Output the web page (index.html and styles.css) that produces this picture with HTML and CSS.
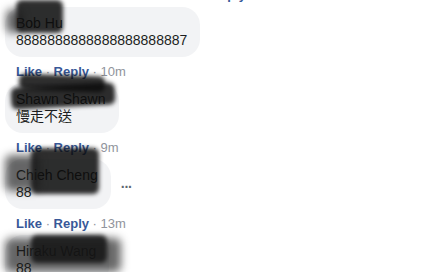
FILE: index.html
```html
<!DOCTYPE html>
<html>
<head>
<meta charset="utf-8">
<link rel="stylesheet" href="styles.css">
</head>
<body>
<div class="thread">
  <div class="cut"><div class="actions cut-line"><span class="link">Like</span><span class="sep"> · </span><span class="link">Reply</span></div></div>

  <div class="comment">
    <div class="row">
      <div class="bubble"><div class="name">Bob Hu</div><div class="body">8888888888888888888887</div></div>
    </div>
    <span class="ink" style="left:11px;top:-7px;width:47px;height:33px"></span>
    <span class="ink soft" style="left:1px;top:2px;width:16px;height:24px"></span>
    <div class="actions"><span class="link">Like</span><span class="sep"> · </span><span class="link">Reply</span><span class="sep"> · </span><span class="time">10m</span></div>
  </div>

  <div class="comment">
    <div class="row">
      <div class="bubble"><div class="name">Shawn Shawn</div><div class="body cjk">慢走不送</div></div>
    </div>
    <span class="ink" style="left:14px;top:-8px;width:86px;height:16px;transform:rotate(2deg)"></span>
    <span class="ink" style="left:6px;top:2px;width:104px;height:22px;transform:rotate(-3deg)"></span>
    <div class="actions"><span class="link">Like</span><span class="sep"> · </span><span class="link">Reply</span><span class="sep"> · </span><span class="time">9m</span></div>
  </div>

  <div class="comment">
    <div class="row">
      <div class="bubble"><div class="name">Chieh Cheng</div><div class="body">88</div></div>
      <div class="more">···</div>
    </div>
    <span class="ink" style="left:26px;top:-11px;width:68px;height:46px"></span>
    <span class="ink soft" style="left:0px;top:-4px;width:34px;height:36px"></span>
    <div class="actions"><span class="link">Like</span><span class="sep"> · </span><span class="link">Reply</span><span class="sep"> · </span><span class="time">13m</span></div>
  </div>

  <div class="comment">
    <div class="row">
      <div class="bubble"><div class="name">Hiraku Wang</div><div class="body">88</div></div>
    </div>
    <span class="ink" style="left:26px;top:0px;width:76px;height:28px"></span>
    <span class="ink soft" style="left:0px;top:3px;width:116px;height:34px"></span>
  </div>
</div>
</body>
</html>
```

FILE: styles.css
```css
html, body {
  margin: 0;
  padding: 0;
  background: #ffffff;
}

.thread {
  padding-left: 5px;
  font-family: "Liberation Sans", Arial, sans-serif;
  color: #1c1e21;
}

.cut {
  height: 7px;
  overflow: hidden;
}

.row {
  display: flex;
  align-items: center;
  gap: 10px;
}

.comment {
  position: relative;
  margin-bottom: 3px;
}

.bubble {
  background: #f2f3f5;
  border-radius: 18px;
  padding: 8px 13px 8px 11px;
  font-size: 14px;
  line-height: 17px;
}

.name {
  color: #1c1e21;
}

.body {
  color: #1c1e21;
}

.cjk {
  font-family: "Liberation Sans", "Noto Sans CJK TC", sans-serif;
}

.more {
  color: #606770;
  font-size: 14px;
  letter-spacing: -1px;
  font-weight: bold;
  margin-top: 6px;
}

.actions {
  margin-top: 7px;
  padding-left: 11px;
  font-size: 13px;
  line-height: 16px;
}

.actions.cut-line {
  margin-top: -13px;
  padding-left: 168px;
}

.link {
  color: #385898;
  font-weight: bold;
}

.sep, .time {
  color: #90949c;
}

.ink {
  position: absolute;
  background: rgba(12, 12, 12, 0.86);
  border-radius: 6px;
  filter: blur(2px);
}

.ink.soft {
  background: rgba(25, 25, 25, 0.65);
  filter: blur(4px);
}
```
